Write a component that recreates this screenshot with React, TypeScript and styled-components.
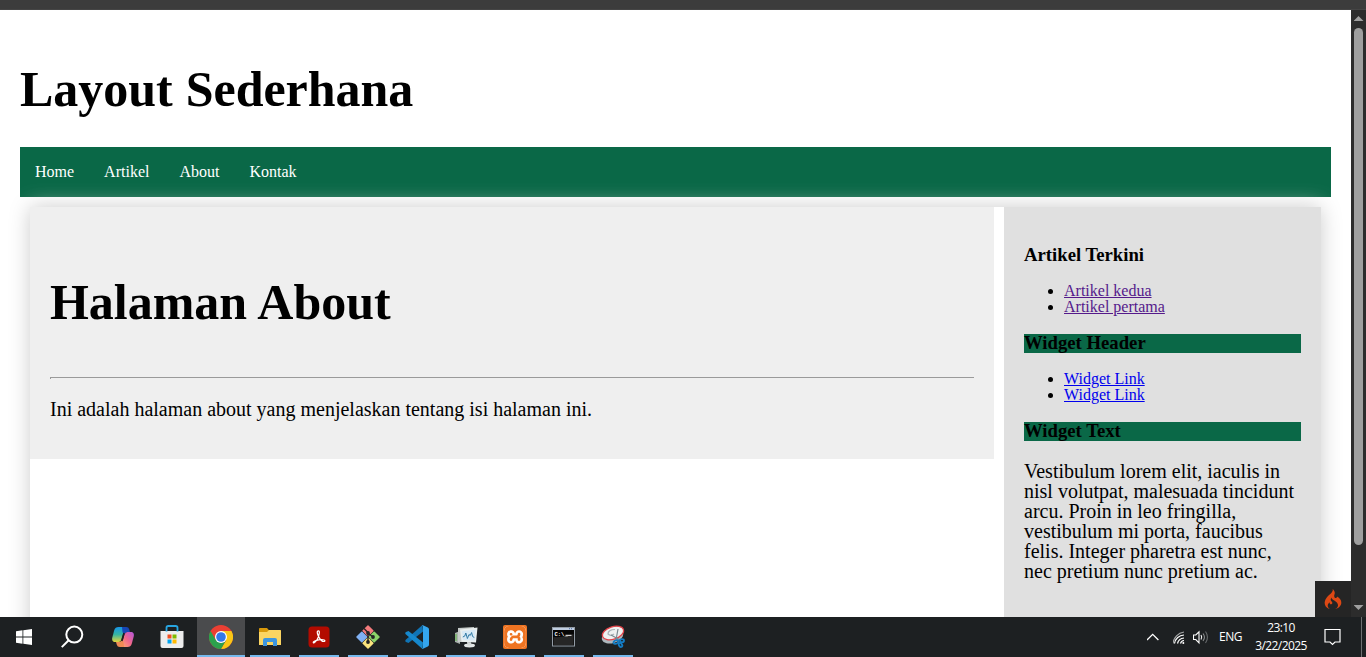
import React from "react";
import styled, { createGlobalStyle } from "styled-components";
import { SiXampp, SiCodeigniter } from "react-icons/si";

const GlobalStyle = createGlobalStyle`
  * { box-sizing: border-box; }
  body { margin: 0; overflow: hidden; background: #fff; color: #000; font: 16px/16px "Liberation Serif", "Times New Roman", serif; }
`;
const Screen = styled.div`
  display: flex; flex-direction: column; width: 1366px; height: 657px; overflow: hidden;
`;
const BrowserEdge = styled.div`
  height: 10px; flex: none; background: #3c3c3c; border-bottom: 1px solid #454545;
`;
const Viewport = styled.div`
  position: relative; display: flex; height: 607px; flex: none;
`;
const Page = styled.div`
  width: 1351px; height: 607px; padding: 0 20px; overflow: hidden;
`;
const Header = styled.header`
  height: 137px; padding-top: 54px;
`;
const Title = styled.h1`
  margin: 0; font-size: 50px; line-height: 50px; word-spacing: 0.5px; letter-spacing: -0.02px; white-space: nowrap;
`;
const Nav = styled.nav`
  display: flex; height: 50px; background: #0a6847;
`;
const NavLink = styled.a`
  padding: 17px 15px; color: #fff; text-decoration: none;
`;
const Wrapper = styled.div`
  display: flex; align-items: flex-start; gap: 10px; width: 1291px; height: 460px; margin: 10px;
  box-shadow: 0 0 20px #ccc;
`;
const Main = styled.main`
  width: 964px; height: 252px; padding: 70px 20px 0; background: #efefef;
`;
const Rule = styled.hr`
  margin: 50px 0 20px; border: 0; height: 2px; border-top: 1px solid #9a9a9a; border-left: 1px solid #9a9a9a;
`;
const Paragraph = styled.p`
  margin: 0; font-size: 20px; line-height: 20px;
`;
const Aside = styled.aside`
  width: 317px; height: 460px; padding: 39px 20px 0; background: #e0e0e0;
`;
const WidgetTitle = styled.h3<{ $filled?: boolean }>`
  margin: 0; height: 19px; font-size: 18.72px; line-height: 18px;
  background: ${(p) => (p.$filled ? "#0a6847" : "transparent")};
`;
const WidgetList = styled.ul`
  margin: 18px 0 19px; padding-left: 40px; line-height: 16px;
`;
const WidgetLink = styled.a<{ $visited?: boolean }>`
  color: ${(p) => (p.$visited ? "#551a8b" : "#0000ee")}; text-decoration: underline;
`;
const WidgetBody = styled.div`
  margin-top: 20px;
`;
const Scrollbar = styled.div`
  display: flex; flex-direction: column; align-items: center; justify-content: space-between;
  width: 15px; height: 607px; padding: 6px 0 7px; background: #2c2c2c;
`;
const Thumb = styled.div`
  width: 9px; height: 517px; margin: 7px 0 auto; border-radius: 5px; background: #9f9f9f;
`;
const Arrow = styled.div<{ $down?: boolean }>`
  width: 10px; height: 5px; background: #9f9f9f;
  clip-path: ${(p) => (p.$down ? "polygon(0 0, 100% 0, 50% 100%)" : "polygon(50% 0, 100% 100%, 0 100%)")};
`;
const DebugBadge = styled.div`
  position: absolute; right: 15px; bottom: 0; display: flex; align-items: center; justify-content: center;
  width: 36px; height: 36px; background: #252525; color: #dd4814;
`;
const Taskbar = styled.footer`
  display: flex; justify-content: space-between; flex: none; height: 40px; background: #1d2022; color: #fff;
  font: 12px/18px "Open Sans", "Noto Sans", sans-serif;
`;
const Apps = styled.div`
  display: flex; height: 40px;
`;
const AppButton = styled.div<{ $active?: boolean; $running?: boolean; $first?: boolean }>`
  display: flex; align-items: center; justify-content: center; height: 40px;
  width: ${(p) => (p.$first || p.$active ? 48 : p.$running ? 40 : 49)}px;
  margin-left: ${(p) => (p.$active ? 0 : p.$running ? 9 : 0)}px;
  background: ${(p) => (p.$active ? "#4a4b4d" : "transparent")};
  box-shadow: ${(p) => (p.$running ? "inset 0 -2px #76b9ed" : "none")};
  &:nth-child(3) { margin-left: 2px; }
  &:nth-child(4) { width: 50px; }
  &:nth-child(6) { margin-left: 5px; }
`;
const XamppTile = styled.div`
  display: flex; align-items: center; justify-content: center; width: 24px; height: 24px;
  padding: 1px; border-radius: 2px; background: linear-gradient(#ef7422, #ef7422) border-box;
  svg { background: #fff; border-radius: 5px; color: #ef7422; }
`;
const Tray = styled.div`
  display: flex; align-items: center;
`;
const TrayIcons = styled.div`
  display: flex; align-items: center; margin-right: 8px;
`;
const Language = styled.span`
  width: 36px; font-size: 12px; letter-spacing: -0.5px;
`;
const Clock = styled.div`
  width: 52px; margin-right: 17px; text-align: center; font-size: 12px; letter-spacing: -0.6px; white-space: nowrap;
`;
const ShowDesktop = styled.div`
  width: 5px; height: 40px; margin-left: 20px; border-left: 1px solid #6d6f71;
`;

const WindowsIcon = () => (
  <svg width="16" height="16" viewBox="0 0 16 16" fill="#fff">
    <path d="M0 2.200 6.500 1.300V7.500H0zM7.300 1.200 16 0v7.500H7.300zM0 8.400h6.500v6.300L0 13.800zM7.300 8.400H16V16l-8.700-1.200z" />
  </svg>
);
const SearchIcon = () => (
  <svg width="24" height="24" viewBox="0 0 24 24" fill="none" stroke="#fff" strokeWidth="2">
    <circle cx="14.3" cy="9.6" r="8" /><path d="m8.4 15.5-6.6 6.6" />
  </svg>
);
const CopilotIcon = () => (
  <svg width="24" height="22" viewBox="0 0 24 22">
    <defs>
      <linearGradient id="cpa" x1="0" y1="0" x2="0" y2="1"><stop stopColor="#1795e8" /><stop offset=".5" stopColor="#36b5a2" /><stop offset="1" stopColor="#e4d53b" /></linearGradient>
      <linearGradient id="cpb" x1="1" y1="0" x2="0" y2="1"><stop stopColor="#b257df" /><stop offset=".5" stopColor="#f0668c" /><stop offset="1" stopColor="#ffab6b" /></linearGradient>
    </defs>
    <path d="M7.500 1H14l-3.500 12.500Q9.700 16 7.500 16H4.300C1.500 16 .7 14 1.300 11.500L3.300 4Q4.200 1 7.500 1z" fill="url(#cpa)" />
    <path d="M11 1h4.300q2.300 0 2.900 2.300L19 6.500h-3q-2.300 0-3.100 2.500L11.500 6z" fill="#1746b5" />
    <path d="M16.500 21H10l3.500-12.500Q14.300 6 16.500 6h3.200c2.800 0 3.600 2 3 4.500L20.700 18q-.9 3-4.200 3z" fill="url(#cpb)" />
    <path d="M13 21H8.700q-2.300 0-2.900-2.300L5 16h3q2.300 0 3.100-2.500L12.500 16z" fill="#ef8a54" />
    <path d="m13 7-2.200 8" stroke="#1d2022" strokeWidth="1.600" />
  </svg>
);
const StoreIcon = () => (
  <svg width="24" height="24" viewBox="0 0 24 24">
    <path d="M.5 6h23v15q0 2-2 2h-19q-2 0-2-2z" fill="#ededed" />
    <path d="M6.500 6.500V2.800Q6.500 1 8.300 1h7.400q1.800 0 1.800 1.800v3.700" fill="none" stroke="#27a5e1" strokeWidth="1.800" />
    <path fill="#f25022" d="M7.5 9.5h4v4h-4z" /><path fill="#7fba00" d="M12.5 9.5h4v4h-4z" />
    <path fill="#00a4ef" d="M7.5 14.5h4v4h-4z" /><path fill="#ffb900" d="M12.5 14.5h4v4h-4z" />
  </svg>
);
const ChromeIcon = () => (
  <svg width="24" height="24" viewBox="0 0 24 24">
    <circle cx="12" cy="12" r="12" fill="#ea3f33" />
    <path d="M12 6h10.400A12 12 0 0 1 12 24l5.200-9z" fill="#fbc616" />
    <path d="M1.600 6 6.800 15 12 18l5.200-3L12 24A12 12 0 0 1 1.600 6z" fill="#2ca14c" />
    <circle cx="12" cy="12" r="6" fill="#fff" /><circle cx="12" cy="12" r="4.8" fill="#3478e8" />
  </svg>
);
const FolderIcon = () => (
  <svg width="22" height="20" viewBox="0 0 22 20">
    <path d="M0 1.8Q0 1 1 1h7l1.8 2H21q1 0 1 1v14H0z" fill="#d99a0b" />
    <path d="M0 5h8l2-2h11q1 0 1 1v14H0z" fill="#fbd562" />
    <path d="M4 19v-6q0-2 2-2h10q2 0 2 2v6h-4v-4H8v4z" fill="#3d96df" />
  </svg>
);
const AcrobatIcon = () => (
  <svg width="22" height="22" viewBox="0 0 22 22">
    <rect x=".5" y=".5" width="21" height="21" rx="3.5" fill="#b30b00" />
    <path d="M10.5 4.8c-2.4 0-.8 4 .4 6.3 1.2 2.2 3.6 4.8 5.4 4.3 1.8-.8-.6-2.3-4.2-1.8-3 .3-7.5 1.6-6.8 3 .8 1.3 3.5-2.2 4.6-4.7 1.1-2.5 2.3-7.1.6-7.1z" fill="none" stroke="#fff" strokeWidth="1.2" />
  </svg>
);
const GitIcon = () => (
  <svg width="24" height="24" viewBox="0 0 24 24">
    <g strokeLinejoin="round" strokeWidth="1.500">
      <path d="m12 1 4.800 4.800L12 10.600 7.200 5.800z" fill="#f47b7d" stroke="#f47b7d" />
      <path d="m5.800 7.200 4.800 4.800-4.800 4.800L1 12z" fill="#80b1f3" stroke="#80b1f3" />
      <path d="m18.200 7.200L23 12l-4.800 4.800-4.800-4.800z" fill="#8bd36a" stroke="#8bd36a" />
      <path d="m12 13.400 4.800 4.800L12 23l-4.800-4.800z" fill="#fbe47e" stroke="#fbe47e" />
    </g>
    <path d="m8 3.500 4 4V18M12 8l5 4" fill="none" stroke="#242424" strokeWidth="1.400" />
    <circle cx="12" cy="8" r="1.900" fill="#242424" /><circle cx="17" cy="12" r="1.900" fill="#242424" /><circle cx="12" cy="17" r="1.900" fill="#242424" />
  </svg>
);
const CodeIcon = () => (
  <svg width="24" height="24" viewBox="0 0 24 24">
    <path d="M17.5 0 18 6.5 3.5 18 1 17q-1.5-1 0-2.5z" fill="#1074b5" />
    <path d="M1 9.5q-1.5-1.5 0-2.4L3.5 6 18 17.5l-.5 6.5z" fill="#1688cd" />
    <path d="m17.5 0 5.3 2.5q1.2.6 1.2 2v15q0 1.4-1.2 2L17.5 24q-.8-.4.5-1.5V1.5Q16.7.4 17.5 0z" fill="#34a6ef" />
  </svg>
);
const MonitorIcon = () => (
  <svg width="24" height="22" viewBox="0 0 24 22">
    <path d="m1 7 5-2v13l-5-2z" fill="#a9b0ad" /><path d="M2 8v7" stroke="#5dba43" />
    <path d="M4 2 20 1v15H4z" fill="#c6cbc9" />
    <path d="m6 3.500 17.500-2-1.500 15-14.500-.8z" fill="#e9eeee" />
    <path d="m8 5.300 13.500-1.600-1 10.800-11.500-.6z" fill="#d7e9f5" />
    <path d="m8.800 11 2-1 1-3 1.6 5.500 1.6-4 1.200 1 1.400-3 1 4 1.700 1" fill="none" stroke="#327ba6" />
    <ellipse cx="15.500" cy="19.500" rx="5.500" ry="1.900" fill="#e3e6e6" /><path d="m13 16 4 .2.500 3-4 .3z" fill="#d5d9d9" />
  </svg>
);
const XamppIcon = () => (
  <XamppTile><SiXampp size={22} /></XamppTile>
);
const TerminalIcon = () => (
  <svg width="24" height="20" viewBox="0 0 24 20">
    <rect x=".5" y=".5" width="22" height="18.500" fill="#050505" stroke="#929ba5" />
    <path d="M1 1h21v2H1z" fill="#bfcde1" /><path d="M17 1.700h4" stroke="#4b6ca0" strokeDasharray="1 1" />
    <path d="M1.500 18V10q10 1 20-3v11z" fill="#262626" />
    <text x="2.500" y="9" fill="#fff" fontFamily="Liberation Mono" fontSize="5.500" fontWeight="700">C:\_</text>
    <path d="M13.500 8.300h6" stroke="#fff" />
  </svg>
);
const SnipIcon = () => (
  <svg width="24" height="24" viewBox="0 0 24 24">
    <ellipse cx="11.500" cy="11.500" rx="11" ry="6.500" transform="rotate(-18 11.500 11.500)" fill="#aeb8be" />
    <ellipse cx="12" cy="8" rx="11" ry="6.200" transform="rotate(-18 12 8)" fill="#eff1f1" stroke="#e24349" strokeWidth="1.200" />
    <path d="M14 4.500c-4.500 0-7 2-7 4.500 2 2 4 1.500 6 0" fill="none" stroke="#a9b3b8" strokeWidth="1.200" />
    <path d="m17 4-2 11M10 10l9 5" fill="none" stroke="#7b8990" strokeWidth="1.200" />
    <g fill="none" stroke="#147cc4" strokeWidth="1.800"><ellipse cx="15" cy="17" rx="2.600" ry="1.600" transform="rotate(-25 15 17)" /><ellipse cx="21" cy="15.700" rx="2" ry="1.500" /><ellipse cx="19.500" cy="20" rx="1.500" ry="2.200" transform="rotate(-35 19.500 20)" /></g>
  </svg>
);
const ChevronIcon = () => (
  <svg width="26" height="20" viewBox="0 0 26 20" fill="none" stroke="#fff" strokeWidth="1.300"><path d="m-.5 13 5.700-5.700L10.900 13" transform="translate(.5)" /></svg>
);
const WifiIcon = () => (
  <svg width="20" height="20" viewBox="2 0 20 20" fill="none" stroke="#fff" strokeWidth="1.200">
    <path d="M2 16.500A13 13 0 0 1 13 5" stroke="#a4a6a7" /><path d="M3.500 16.500A10 10 0 0 1 13 8M6.500 16.500A7 7 0 0 1 13 11M9.500 16.500a4 4 0 0 1 3.500-3" /><circle cx="12.300" cy="16" r="1" fill="#fff" stroke="none" />
  </svg>
);
const SpeakerIcon = () => (
  <svg width="18" height="20" viewBox="1 0 18 20" fill="none" stroke="#fff" strokeWidth="1.100">
    <path d="M1.500 8h2.300L7 4.800v11L3.800 12.500H1.500z" /><path d="M9 8q1.500 2.200 0 4.500" /><path d="M11 6.500q3 3.700 0 7.500" stroke="#8b8d8f" /><path d="M13.500 4.500q4 5.700 0 11.500" stroke="#686b6d" />
  </svg>
);
const NoticeIcon = () => (
  <svg width="17" height="18" viewBox="0 0 17 18" fill="none" stroke="#fff" strokeWidth="1.200"><path d="M1 1.500h15V14h-5l-2.500 2.500L6 14H1z" /></svg>
);

const runningApps = [FolderIcon, AcrobatIcon, GitIcon, CodeIcon, MonitorIcon, XamppIcon, TerminalIcon, SnipIcon];

export default function App() {
  return (
    <Screen>
      <GlobalStyle />
      <BrowserEdge />
      <Viewport>
        <Page>
          <Header><Title>Layout Sederhana</Title></Header>
          <Nav>{["Home", "Artikel", "About", "Kontak"].map((label) => <NavLink key={label}>{label}</NavLink>)}</Nav>
          <Wrapper>
            <Main>
              <Title>Halaman About</Title>
              <Rule />
              <Paragraph>Ini adalah halaman about yang menjelaskan tentang isi halaman ini.</Paragraph>
            </Main>
            <Aside>
              <WidgetTitle>Artikel Terkini</WidgetTitle>
              <WidgetList>
                <li><WidgetLink $visited>Artikel kedua</WidgetLink></li>
                <li><WidgetLink $visited>Artikel pertama</WidgetLink></li>
              </WidgetList>
              <WidgetTitle $filled>Widget Header</WidgetTitle>
              <WidgetList>
                <li><WidgetLink>Widget Link</WidgetLink></li>
                <li><WidgetLink>Widget Link</WidgetLink></li>
              </WidgetList>
              <WidgetTitle $filled>Widget Text</WidgetTitle>
              <WidgetBody>
                <Paragraph>Vestibulum lorem elit, iaculis in nisl volutpat, malesuada tincidunt arcu. Proin in leo fringilla, vestibulum mi porta, faucibus felis. Integer pharetra est nunc, nec pretium nunc pretium ac.</Paragraph>
              </WidgetBody>
            </Aside>
          </Wrapper>
        </Page>
        <Scrollbar><Arrow /><Thumb /><Arrow $down /></Scrollbar>
        <DebugBadge><SiCodeigniter size={20} /></DebugBadge>
      </Viewport>
      <Taskbar>
        <Apps>
          <AppButton $first><WindowsIcon /></AppButton>
          <AppButton $first><SearchIcon /></AppButton>
          <AppButton><CopilotIcon /></AppButton>
          <AppButton><StoreIcon /></AppButton>
          <AppButton $active $running><ChromeIcon /></AppButton>
          {runningApps.map((Icon, index) => <AppButton key={index} $running><Icon /></AppButton>)}
        </Apps>
        <Tray>
          <TrayIcons><ChevronIcon /><WifiIcon /><SpeakerIcon /></TrayIcons>
          <Language>ENG</Language>
          <Clock><div>23:10</div><div>3/22/2025</div></Clock>
          <NoticeIcon />
          <ShowDesktop />
        </Tray>
      </Taskbar>
    </Screen>
  );
}
